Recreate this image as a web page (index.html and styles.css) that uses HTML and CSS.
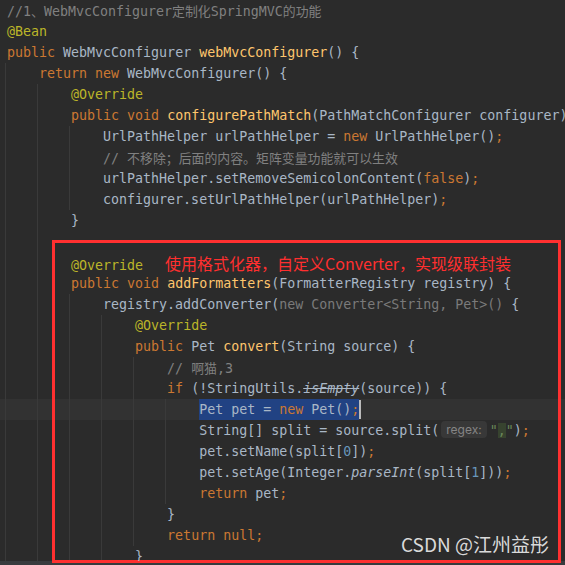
FILE: index.html
```html
<!DOCTYPE html>
<html>
<head>
<meta charset="utf-8">
<link rel="stylesheet" href="styles.css">
</head>
<body>
<div class="editor">
  <div class="line"><span class="c">//1<span class="cj">、</span>WebMvcConfigurer<span class="cj">定制化</span>SpringMVC<span class="cj">的功能</span></span></div>
  <div class="line"><span class="an">@Bean</span></div>
  <div class="line"><span class="k">public</span> WebMvcConfigurer <span class="m">webMvcConfigurer</span>() {</div>
  <div class="line">    <span class="k">return new</span> WebMvcConfigurer() {</div>
  <div class="line">        <span class="an">@Override</span></div>
  <div class="line">        <span class="k">public void</span> <span class="m">configurePathMatch</span>(PathMatchConfigurer configurer) {</div>
  <div class="line">            UrlPathHelper urlPathHelper = <span class="k">new</span> UrlPathHelper()<span class="k">;</span></div>
  <div class="line">            <span class="c">// <span class="cj">不移除；后面的内容。矩阵变量功能就可以生效</span></span></div>
  <div class="line">            urlPathHelper.setRemoveSemicolonContent(<span class="k">false</span>)<span class="k">;</span></div>
  <div class="line">            configurer.setUrlPathHelper(urlPathHelper)<span class="k">;</span></div>
  <div class="line">        }</div>
  <div class="line"></div>
  <div class="line">        <span class="an">@Override</span><span class="note">使用格式化器，自定义Converter，实现级联封装</span></div>
  <div class="line">        <span class="k">public void</span> <span class="m">addFormatters</span>(FormatterRegistry registry) {</div>
  <div class="line">            registry.addConverter(<span class="g">new Converter&lt;String, Pet&gt;()</span> {</div>
  <div class="line">                <span class="an">@Override</span></div>
  <div class="line">                <span class="k">public</span> Pet <span class="m">convert</span>(String source) {</div>
  <div class="line">                    <span class="c">// <span class="cj">啊猫</span>,3</span></div>
  <div class="line">                    <span class="k">if</span> (!StringUtils.<span class="it dep">isEmpty</span>(source)) {</div>
  <div class="line current">                        <span class="sel">Pet pet = <span class="k">new</span> Pet()<span class="k">;</span></span><span class="caret"></span></div>
  <div class="line">                        String[] split = source.split(<span class="hint">regex:</span><span class="s">"<span class="match">,</span>"</span>)<span class="k">;</span></div>
  <div class="line">                        pet.setName(split[<span class="n">0</span>])<span class="k">;</span></div>
  <div class="line">                        pet.setAge(Integer.<span class="it">parseInt</span>(split[<span class="n">1</span>]))<span class="k">;</span></div>
  <div class="line">                        <span class="k">return</span> pet<span class="k">;</span></div>
  <div class="line">                    }</div>
  <div class="line">                    <span class="k">return null;</span></div>
  <div class="line">                }</div>

  <div class="guide g0"></div>
  <div class="guide g1"></div>
  <div class="guide g2a"></div>
  <div class="guide g2b"></div>
  <div class="guide g3"></div>
  <div class="guide g4"></div>
  <div class="guide g5"></div>
</div>
<div class="hscroll"></div>
<div class="redbox"></div>
<div class="watermark">CSDN @江州益彤</div>
</body>
</html>
```

FILE: styles.css
```css
html, body {
  margin: 0;
  padding: 0;
  background: #2b2b2b;
}
body {
  width: 565px;
  height: 565px;
  overflow: hidden;
  position: relative;
}
.editor {
  position: relative;
  height: 561px;
  overflow: hidden;
  font-family: "DejaVu Sans Mono", "Noto Sans CJK SC", monospace;
  font-size: 13.3px;
  color: #a9b7c6;
}
.line {
  position: relative;
  z-index: 1;
  height: 21px;
  line-height: 22px;
  padding-left: 7px;
  white-space: pre;
}
.line.current {
  background: #323232;
  z-index: 0;
}
.c { color: #808080; }
.cj {
  font-family: "Noto Sans CJK SC", sans-serif;
  font-size: 12.9px;
}
.an { color: #bbb529; }
.k { color: #cc7832; }
.m { color: #ffc66d; }
.n { color: #6897bb; }
.s { color: #6a8759; }
.g { color: #7a7a7a; }
.it { font-style: italic; }
.dep { text-decoration: line-through; }
.match { background: #37432f; }
.sel {
  display: inline-block;
  background: #214283;
  height: 21px;
  line-height: 22px;
  vertical-align: top;
}
.caret {
  display: inline-block;
  width: 2px;
  height: 19px;
  margin-top: 1px;
  background: #bbbbbb;
  vertical-align: top;
}
.hint {
  display: inline-block;
  font-family: "Inter", "Noto Sans", sans-serif;
  font-size: 12px;
  color: #858585;
  background: #383838;
  border-radius: 4px;
  padding: 0 5px;
  margin: 0 3px 0 2px;
  height: 17px;
  line-height: 17px;
  vertical-align: 1px;
}
.note {
  font-family: "Noto Sans CJK SC", sans-serif;
  font-size: 16px;
  color: #ff2f2f;
  margin-left: 22px;
}
.guide {
  position: absolute;
  width: 1px;
  background: #3a3a3a;
  z-index: 0;
}
.g0 { left: 5px; top: 63px; height: 498px; }
.g1 { left: 37px; top: 84px; height: 477px; }
.g2a { left: 69px; top: 126px; height: 84px; }
.g2b { left: 69px; top: 294px; height: 267px; }
.g3 { left: 101px; top: 315px; height: 246px; }
.g4 { left: 133px; top: 357px; height: 189px; }
.g5 { left: 165px; top: 399px; height: 105px; }
.hscroll {
  height: 4px;
  background: #383b3e;
}
.redbox {
  position: absolute;
  left: 52px;
  top: 240px;
  width: 503px;
  height: 317px;
  border: 3px solid #ff3030;
}
.watermark {
  position: absolute;
  right: 16px;
  top: 530px;
  font-family: "Noto Sans CJK SC", sans-serif;
  font-size: 19px;
  line-height: 27px;
  color: #dadada;
}
```
